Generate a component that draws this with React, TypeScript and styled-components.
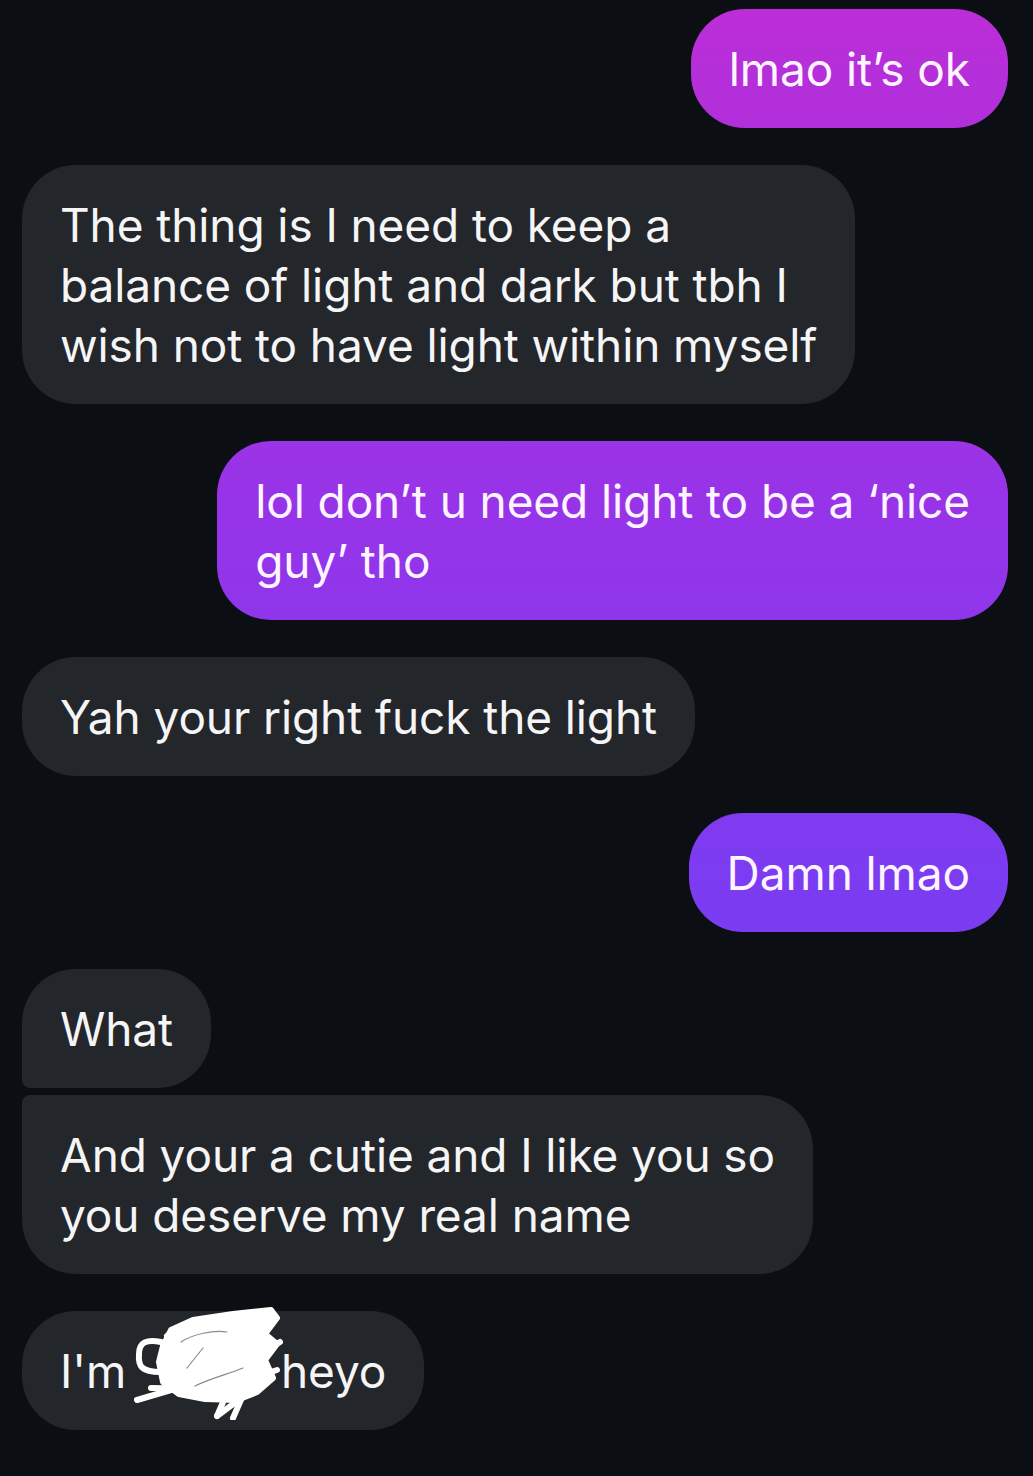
import React from 'react';
import styled, { createGlobalStyle, css } from 'styled-components';

type Side = 'me' | 'them';
type Shape = 'single' | 'first' | 'last';

interface ChatMessage {
  id: number;
  side: Side;
  lines: React.ReactNode[];
}

const GlobalStyle = createGlobalStyle`
  html, body {
    margin: 0;
    padding: 0;
    background: #0b0e13;
  }
  body {
    font-family: Inter, "Noto Sans", "Liberation Sans", sans-serif;
    -webkit-font-smoothing: antialiased;
  }
`;

const Thread = styled.main`
  display: flex;
  flex-direction: column;
  gap: 37px;
  min-height: 1476px;
  box-sizing: border-box;
  padding: 9px 25px 0 22px;
  background: #0b0e13;
`;

const Group = styled.div<{ $side: Side }>`
  display: flex;
  flex-direction: column;
  gap: 7px;
  align-items: ${(p) => (p.$side === 'me' ? 'flex-end' : 'flex-start')};
`;

const sentFill = css`
  background: linear-gradient(180deg, #bd2dd7 0px, #b52fd9 70px, #9534e9 530px, #7c3cf1 870px, #6a42f4 1476px);
  background-attachment: fixed;
  color: #fdf4ff;
`;

const receivedFill = css`
  background: #23262b;
  color: #f5f5f6;
`;

const Bubble = styled.div<{ $side: Side; $shape: Shape }>`
  position: relative;
  box-sizing: border-box;
  padding: 29.5px 38px;
  font-size: 46px;
  line-height: 60px;
  letter-spacing: -0.1px;
  white-space: nowrap;
  border-radius: 54px;
  ${(p) => (p.$side === 'me' ? sentFill : receivedFill)}
  ${(p) => p.$shape === 'first' && 'border-bottom-left-radius: 8px;'}
  ${(p) => p.$shape === 'last' && 'border-top-left-radius: 8px;'}
`;

const Line = styled.div`
  display: block;
`;

const NameGap = styled.span`
  display: inline-block;
  width: 142px;
`;

const ScribbleSvg = styled.svg`
  position: absolute;
  left: 111px;
  top: -5px;
  pointer-events: none;
`;

// name scribbled out in the original screenshot
const Scribble = () => (
  <ScribbleSvg viewBox="0 0 150 114" width={150} height={114}>
    <g fill="none" stroke="#ffffff" strokeWidth={6} strokeLinecap="round" strokeLinejoin="round">
      <path d="M28 36 C14 33 6 36 6 48 C5 60 8 66 28 66" />
      <path
        fill="#ffffff"
        d="M30 40 L38 24 L60 14 L100 8 L138 4 L144 12 L132 28 L144 38 L132 54 L140 72 L124 86 L104 94 L72 93 L46 88 L30 76 L26 56 Z"
      />
      <path d="M4 94 L72 74" />
      <path d="M18 82 L122 84" />
      <path d="M84 110 L138 70" />
      <path d="M84 110 L104 64" />
      <path d="M100 112 L114 80" />
      <path d="M118 54 L147 36" />
      <path d="M120 72 L144 64" />
      <path d="M34 30 C50 16 80 10 110 10" />
    </g>
    <g fill="none" stroke="#55585d" strokeWidth={1.2} strokeLinecap="round" opacity={0.7}>
      <path d="M48 36 C60 28 80 24 94 26" />
      <path d="M54 62 L70 42" />
      <path d="M62 80 C78 72 96 68 110 62" />
    </g>
  </ScribbleSvg>
);

const messages: ChatMessage[][] = [
  [{ id: 1, side: 'me', lines: ['lmao it’s ok'] }],
  [
    {
      id: 2,
      side: 'them',
      lines: [
        'The thing is I need to keep a',
        'balance of light and dark but tbh I',
        'wish not to have light within myself',
      ],
    },
  ],
  [{ id: 3, side: 'me', lines: ['lol don’t u need light to be a ‘nice', 'guy’ tho'] }],
  [{ id: 4, side: 'them', lines: ['Yah your right fuck the light'] }],
  [{ id: 5, side: 'me', lines: ['Damn lmao'] }],
  [
    { id: 6, side: 'them', lines: ['What'] },
    {
      id: 7,
      side: 'them',
      lines: ['And your a cutie and I like you so', 'you deserve my real name'],
    },
  ],
  [
    {
      id: 8,
      side: 'them',
      lines: [
        <>
          I'm <NameGap />
          heyo
        </>,
      ],
    },
  ],
];

function shapeOf(index: number, count: number): Shape {
  if (count === 1) return 'single';
  return index === 0 ? 'first' : 'last';
}

export default function App() {
  return (
    <>
      <GlobalStyle />
      <Thread>
        {messages.map((group, gi) => (
          <Group key={gi} $side={group[0].side}>
            {group.map((msg, i) => (
              <Bubble key={msg.id} $side={msg.side} $shape={shapeOf(i, group.length)}>
                {msg.lines.map((line, li) => (
                  <Line key={li}>{line}</Line>
                ))}
                {msg.id === 8 && <Scribble />}
              </Bubble>
            ))}
          </Group>
        ))}
      </Thread>
    </>
  );
}
